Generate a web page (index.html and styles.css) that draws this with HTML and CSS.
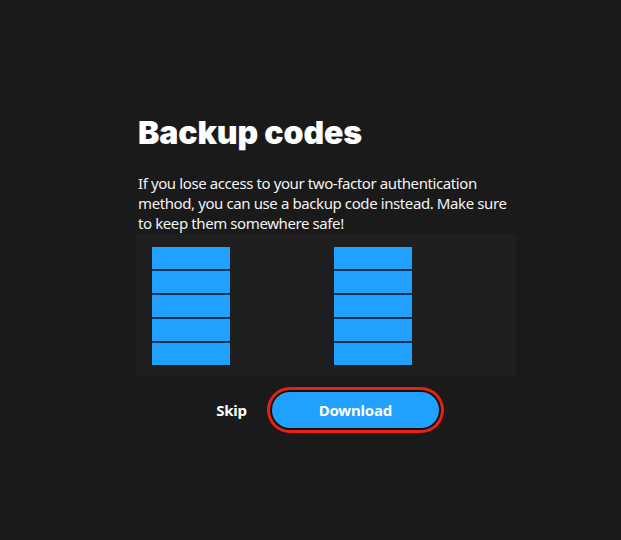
FILE: index.html
```html
<!DOCTYPE html>
<html>
<head>
<meta charset="utf-8">
<link rel="stylesheet" href="styles.css">
</head>
<body>
<main class="panel">
  <h1 class="title">Backup codes</h1>
  <p class="desc">If you lose access to your two-factor authentication method, you can use a backup code instead. Make sure to keep them somewhere safe!</p>
  <div class="codes">
    <div class="col">
      <div class="code"></div><div class="code"></div><div class="code"></div><div class="code"></div><div class="code"></div>
    </div>
    <div class="col">
      <div class="code"></div><div class="code"></div><div class="code"></div><div class="code"></div><div class="code"></div>
    </div>
  </div>
  <div class="actions">
    <button class="skip">Skip</button>
    <button class="download">Download</button>
  </div>
</main>
</body>
</html>
```
FILE: styles.css
```css
html, body {
  margin: 0;
  padding: 0;
  background: #1a1a1a;
  height: 100%;
}
body {
  font-family: "Noto Sans", "Open Sans", sans-serif;
  color: #ffffff;
}
.panel {
  width: 380px;
  margin-left: 136px;
  padding-top: 113px;
}
.title {
  margin: 0 0 0 2px;
  font-family: Inter, "Noto Sans", sans-serif;
  font-weight: 900;
  font-size: 32px;
  line-height: 40px;
  letter-spacing: -0.1px;
}
.desc {
  margin: 20px 0 0 2px;
  font-size: 15px;
  line-height: 20px;
  letter-spacing: -0.4px;
  color: #f2f2f2;
}
.codes {
  margin-top: 1px;
  height: 142px;
  box-sizing: border-box;
  background: #1f1f1f;
  padding: 13px 16px 0 16px;
  display: grid;
  grid-template-columns: 182px 78px;
}
.col {
  width: 78px;
  display: flex;
  flex-direction: column;
  gap: 2px;
  background: #0c3352;
  align-self: start;
}
.code {
  height: 22px;
  background: #20a0ff;
}
.actions {
  margin-top: 16px;
  display: flex;
  justify-content: center;
  align-items: center;
  gap: 25px;
  padding-left: 3px;
}
.skip {
  background: none;
  border: none;
  padding: 0;
  color: #fff;
  font-family: "Noto Sans", sans-serif;
  font-weight: 700;
  font-size: 15px;
  letter-spacing: -0.2px;
}
.download {
  width: 167px;
  height: 36px;
  border: none;
  border-radius: 18px;
  background: #20a0ff;
  color: #fff;
  font-family: "Noto Sans", sans-serif;
  font-weight: 700;
  font-size: 15px;
  letter-spacing: -0.2px;
  box-shadow: 0 0 0 2px #121212, 0 0 0 5px #e8220e;
}
```
